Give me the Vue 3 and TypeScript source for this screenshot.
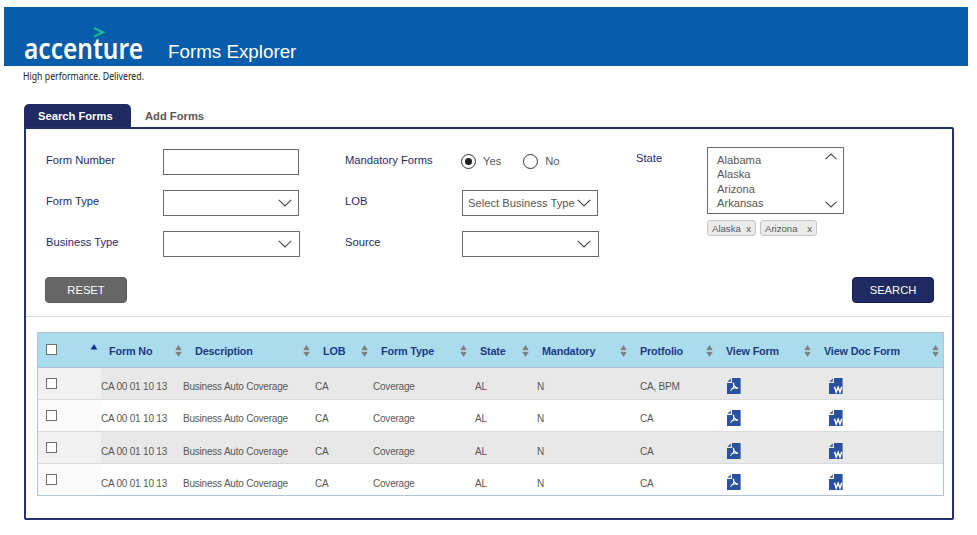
<script setup lang="ts">
import { ref } from 'vue'

interface FormRow {
  formNo: string
  description: string
  lob: string
  formType: string
  state: string
  mandatory: string
  portfolio: string
}

const headings: string[] = [
  'Form No', 'Description', 'LOB', 'Form Type', 'State',
  'Mandatory', 'Protfolio', 'View Form', 'View Doc Form',
]

const base: FormRow = {
  formNo: 'CA 00 01 10 13',
  description: 'Business Auto Coverage',
  lob: 'CA',
  formType: 'Coverage',
  state: 'AL',
  mandatory: 'N',
  portfolio: 'CA',
}
const rows: FormRow[] = [{ ...base, portfolio: 'CA, BPM' }, base, base, base]

const states: string[] = ['Alabama', 'Alaska', 'Arizona', 'Arkansas']
const chips = ref<string[]>(['Alaska', 'Arizona'])
const mandatory = ref<'Yes' | 'No'>('Yes')
const choices: Array<'Yes' | 'No'> = ['Yes', 'No']

function removeChip(name: string): void {
  chips.value = chips.value.filter((c) => c !== name)
}
</script>

<template>
  <div class="page">
    <header class="banner">
      <svg class="logo" width="122" height="40" viewBox="0 0 122 40">
        <path d="M73 2 L82 6.2 L73 10.4" class="logo-mark" />
        <text x="3" y="33" textLength="119" lengthAdjust="spacingAndGlyphs" class="logo-text">accenture</text>
      </svg>
      <h1>Forms Explorer</h1>
    </header>
    <svg class="tagline" width="140" height="20" viewBox="0 0 140 20">
      <text x="2" y="14" textLength="121" lengthAdjust="spacingAndGlyphs">High performance. Delivered.</text>
    </svg>

    <nav class="tabs">
      <a class="tab active">Search Forms</a>
      <a class="tab">Add Forms</a>
    </nav>

    <main class="panel">
      <section class="filters">
        <div class="col first">
          <div class="field"><label>Form Number</label><input type="text" class="box" /></div>
          <div class="field">
            <label>Form Type</label>
            <div class="box"><svg class="chev" width="14" height="8" viewBox="0 0 14 8"><path d="M.8 .8 L7 7 L13.2 .8" /></svg></div>
          </div>
          <div class="field">
            <label>Business Type</label>
            <div class="box wide"><svg class="chev" width="14" height="8" viewBox="0 0 14 8"><path d="M.8 .8 L7 7 L13.2 .8" /></svg></div>
          </div>
        </div>

        <div class="col second">
          <div class="field">
            <label>Mandatory Forms</label>
            <div class="radios">
              <span v-for="c in choices" :key="c" class="radio" @click="mandatory = c">
                <i class="ring" :class="{ on: mandatory === c }"></i>{{ c }}
              </span>
            </div>
          </div>
          <div class="field">
            <label>LOB</label>
            <div class="box"><span>Select Business Type</span><svg class="chev" width="14" height="8" viewBox="0 0 14 8"><path d="M.8 .8 L7 7 L13.2 .8" /></svg></div>
          </div>
          <div class="field">
            <label>Source</label>
            <div class="box wide"><svg class="chev" width="14" height="8" viewBox="0 0 14 8"><path d="M.8 .8 L7 7 L13.2 .8" /></svg></div>
          </div>
        </div>

        <div class="col third">
          <label>State</label>
          <div class="state">
            <div class="list">
              <ul>
                <li v-for="s in states" :key="s">{{ s }}</li>
              </ul>
              <div class="arrows">
                <svg class="chev" width="12" height="7" viewBox="0 0 12 7"><path d="M.6 6.2 L6 1 L11.4 6.2" /></svg>
                <svg class="chev" width="12" height="7" viewBox="0 0 12 7"><path d="M.6 .8 L6 6 L11.4 .8" /></svg>
              </div>
            </div>
            <div class="chips">
              <span v-for="(c, i) in chips" :key="c" class="chip" :class="{ roomy: i === 1 }">
                {{ c }}<b @click="removeChip(c)">x</b>
              </span>
            </div>
          </div>
        </div>
      </section>

      <div class="actions">
        <button type="button" class="reset">RESET</button>
        <button type="button" class="search">SEARCH</button>
      </div>

      <section class="table">
        <div class="row head">
          <div class="pick">
            <i class="check"></i>
            <svg class="asc" width="8" height="6" viewBox="0 0 8 6"><path d="M4 .2 L7.4 5.6 H.6 Z" /></svg>
          </div>
          <div v-for="h in headings" :key="h" class="th">
            <span>{{ h }}</span>
            <svg class="sort" width="7" height="12" viewBox="0 0 7 12"><path d="M3.5 0 L6.7 5 H.3 Z M3.5 12 L.3 7 H6.7 Z" /><path class="mid" d="M.5 6 H6.5" /></svg>
          </div>
        </div>
        <div v-for="(r, i) in rows" :key="i" class="row body">
          <div class="pick"><i class="check"></i></div>
          <div>{{ r.formNo }}</div>
          <div>{{ r.description }}</div>
          <div>{{ r.lob }}</div>
          <div>{{ r.formType }}</div>
          <div>{{ r.state }}</div>
          <div>{{ r.mandatory }}</div>
          <div>{{ r.portfolio }}</div>
          <div>
            <svg class="doc" width="14" height="16" viewBox="0 0 14 16">
              <path class="sheet" d="M5 0 H13.6 V16 H0 V5 H5 Z M3.8 .6 V3.8 H.4 Z" />
              <path class="swirl" d="M6.3 4.6 C6 7.2 8.2 9.7 11.2 10.2 M6.6 5 C7.4 7.6 5.8 10.8 3.4 12.6 M4.6 10.8 C6.4 9.8 8.6 9.5 11 10.4" />
            </svg>
          </div>
          <div>
            <svg class="doc word" width="14" height="16" viewBox="0 0 14 16">
              <path class="sheet" d="M5 0 H13.6 V16 H0 V5 H5 Z M3.8 .6 V3.8 H.4 Z" />
              <path class="w" d="M5.6 8.8 L7.2 14 L9.2 9.2 L11 14 L12.8 8.8" />
            </svg>
          </div>
        </div>
      </section>
    </main>
  </div>
</template>

<style>
body {
  background: #fff;
}
</style>

<style scoped>
* {
  box-sizing: border-box;
}
.page {
  width: 977px;
  height: 535px;
  padding: 7px 9px 0 4px;
  font-family: 'Liberation Sans', Arial, sans-serif;
  font-size: 11.2px;
  color: #585858;
  overflow: hidden;
}
.banner {
  height: 59px;
  display: flex;
  background: #075dab;
  padding: 19px 0 0 17px;
}
.logo {
  display: block;
  flex: none;
}
.logo-mark {
  fill: none;
  stroke: #14b98f;
  stroke-width: 2.2;
}
.logo-text {
  font-family: 'Noto Sans', sans-serif;
  font-weight: 600;
  font-size: 29px;
  fill: #fff;
}
h1 {
  margin: 14px 0 0 25px;
  font-size: 18.8px;
  line-height: 24px;
  font-weight: 400;
  color: #fff;
}
.tagline {
  display: block;
  margin-left: 17px;
}
.tagline text {
  font-family: 'Noto Sans', sans-serif;
  font-size: 11px;
  fill: #222;
}
.tabs {
  display: flex;
  margin: 18px 0 0 20px;
  height: 23px;
}
.tab {
  font-weight: 700;
  line-height: 25px;
  padding-left: 14px;
}
.tab.active {
  width: 107px;
  background: #1f2a63;
  color: #fff;
  border-radius: 5px 5px 0 0;
}
.panel {
  margin-left: 20px;
  width: 930px;
  height: 393px;
  border: 2px solid #26306a;
  border-radius: 0 2px 2px 2px;
}
.filters {
  display: flex;
  height: 148px;
  padding: 18px 0 0 20px;
}
.col label {
  color: #1f2a6b;
}
.first {
  width: 299px;
}
.second {
  width: 291px;
}
.field {
  display: flex;
  align-items: center;
  height: 41px;
}
.field label {
  width: 117px;
  padding-bottom: 15px;
  line-height: 13px;
}
.first .field:nth-child(2) label,
.second .field:nth-child(2) label {
  padding-bottom: 14px;
}
.box {
  display: flex;
  align-items: center;
  justify-content: flex-end;
  width: 136px;
  height: 26px;
  margin: 3px 0 15px 0;
  padding: 0 6px 0 5px;
  border: 1px solid #6b6b6b;
  background: #fff;
}
.box.wide {
  width: 137px;
  padding-right: 7px;
}
.box span {
  flex: 1;
  white-space: nowrap;
}
.chev {
  flex: none;
  fill: none;
  stroke: #444;
  stroke-width: 1.1;
}
.radios {
  display: flex;
  padding: 0 0 13px 0;
  gap: 23px;
}
.radio {
  display: flex;
  align-items: center;
  gap: 7px;
}
.ring {
  width: 15px;
  height: 15px;
  margin-left: -1px;
  border: 1.4px solid #333;
  border-radius: 50%;
  display: grid;
  place-items: center;
}
.ring.on::after {
  content: '';
  width: 7px;
  height: 7px;
  border-radius: 50%;
  background: #222;
}
.third {
  display: flex;
}
.third label {
  width: 71px;
  padding-top: 5px;
}
.list {
  display: flex;
  justify-content: space-between;
  width: 137px;
  height: 67px;
  border: 1px solid #6b6b6b;
  padding: 5px 6px 5px 9px;
}
ul {
  margin: 0;
  padding: 0;
  list-style: none;
}
li {
  line-height: 14.4px;
}
.arrows {
  display: flex;
  flex-direction: column;
  justify-content: space-between;
}
.chips {
  display: flex;
  gap: 4px;
  margin-top: 6px;
}
.chip {
  display: flex;
  justify-content: space-between;
  width: 49px;
  height: 16px;
  padding: 0 4px;
  line-height: 15px;
  font-size: 9.6px;
  border: 1px solid #c6c6c6;
  border-radius: 3px;
  background: #ebebeb;
}
.chip.roomy {
  width: 57px;
}
.chip b {
  font-weight: 400;
}
.actions {
  display: flex;
  justify-content: space-between;
  height: 40px;
  margin-right: 2px;
  padding: 0 16px 0 19px;
  border-bottom: 1px solid #dadada;
}
button {
  width: 82px;
  height: 26px;
  border: 0;
  border-radius: 4px;
  padding: 0;
  font: inherit;
  color: #fff;
}
.reset {
  background: #666;
  border: 1px solid #5b5b5b;
}
.search {
  background: #1f2a63;
  border: 1px solid #151f5a;
}
.table {
  width: 907px;
  margin: 15px 0 0 11px;
  border: 1px solid #b5c0da;
}
.row {
  display: grid;
  grid-template-columns: 63px 82px 132px 58px 102px 62px 103px 87px 102px 1fr;
}
.head {
  height: 35px;
  grid-template-columns: 71px 86px 128px 58px 99px 62px 98px 86px 98px 1fr;
  background: #abdcee;
  border-bottom: 1px solid #b5bcd6;
  color: #1c3a86;
  font-size: 10.8px;
  letter-spacing: -0.15px;
  font-weight: 700;
}
.th {
  display: flex;
  align-items: center;
  justify-content: space-between;
  white-space: nowrap;
  padding: 1px 13px 0 0;
}
.th:last-child {
  padding-right: 4px;
}
.sort {
  fill: #808080;
}
.mid {
  stroke: #b3b3b3;
  stroke-width: 0.8;
}
.check {
  display: block;
  width: 11px;
  height: 11px;
  border: 1px solid #6e6e6e;
  background: #fff;
}
.head .pick {
  display: flex;
  justify-content: space-between;
  padding: 11px 11px 0 8px;
}
.asc {
  fill: #0b2a94;
}
.body {
  height: 32px;
  border-bottom: 1px solid #d9d9de;
  font-size: 10px;
  letter-spacing: -0.21px;
  line-height: 12px;
  white-space: nowrap;
}
.body:last-child {
  height: 31px;
  border-bottom: 0;
}
.body:nth-child(even) {
  background: #e8e8e8;
}
.body > div {
  padding-top: 13px;
}
.body:nth-child(n + 4) > div {
  padding-top: 14px;
}
.body > .pick,
.body:nth-child(n + 4) > .pick {
  background: #fafafa;
  padding: 10px 0 0 8px;
}
.body:nth-child(even) > .pick {
  background: #f1f1f1;
}
.doc {
  display: block;
  margin-top: -3px;
  overflow: visible;
}
.body:last-child .doc {
  margin-top: -4px;
}
.sheet {
  fill: #2a50a0;
}
.swirl {
  fill: none;
  stroke: #fff;
  stroke-width: 1.1;
}
.w {
  fill: none;
  stroke: #fff;
  stroke-width: 1.5;
}
</style>
